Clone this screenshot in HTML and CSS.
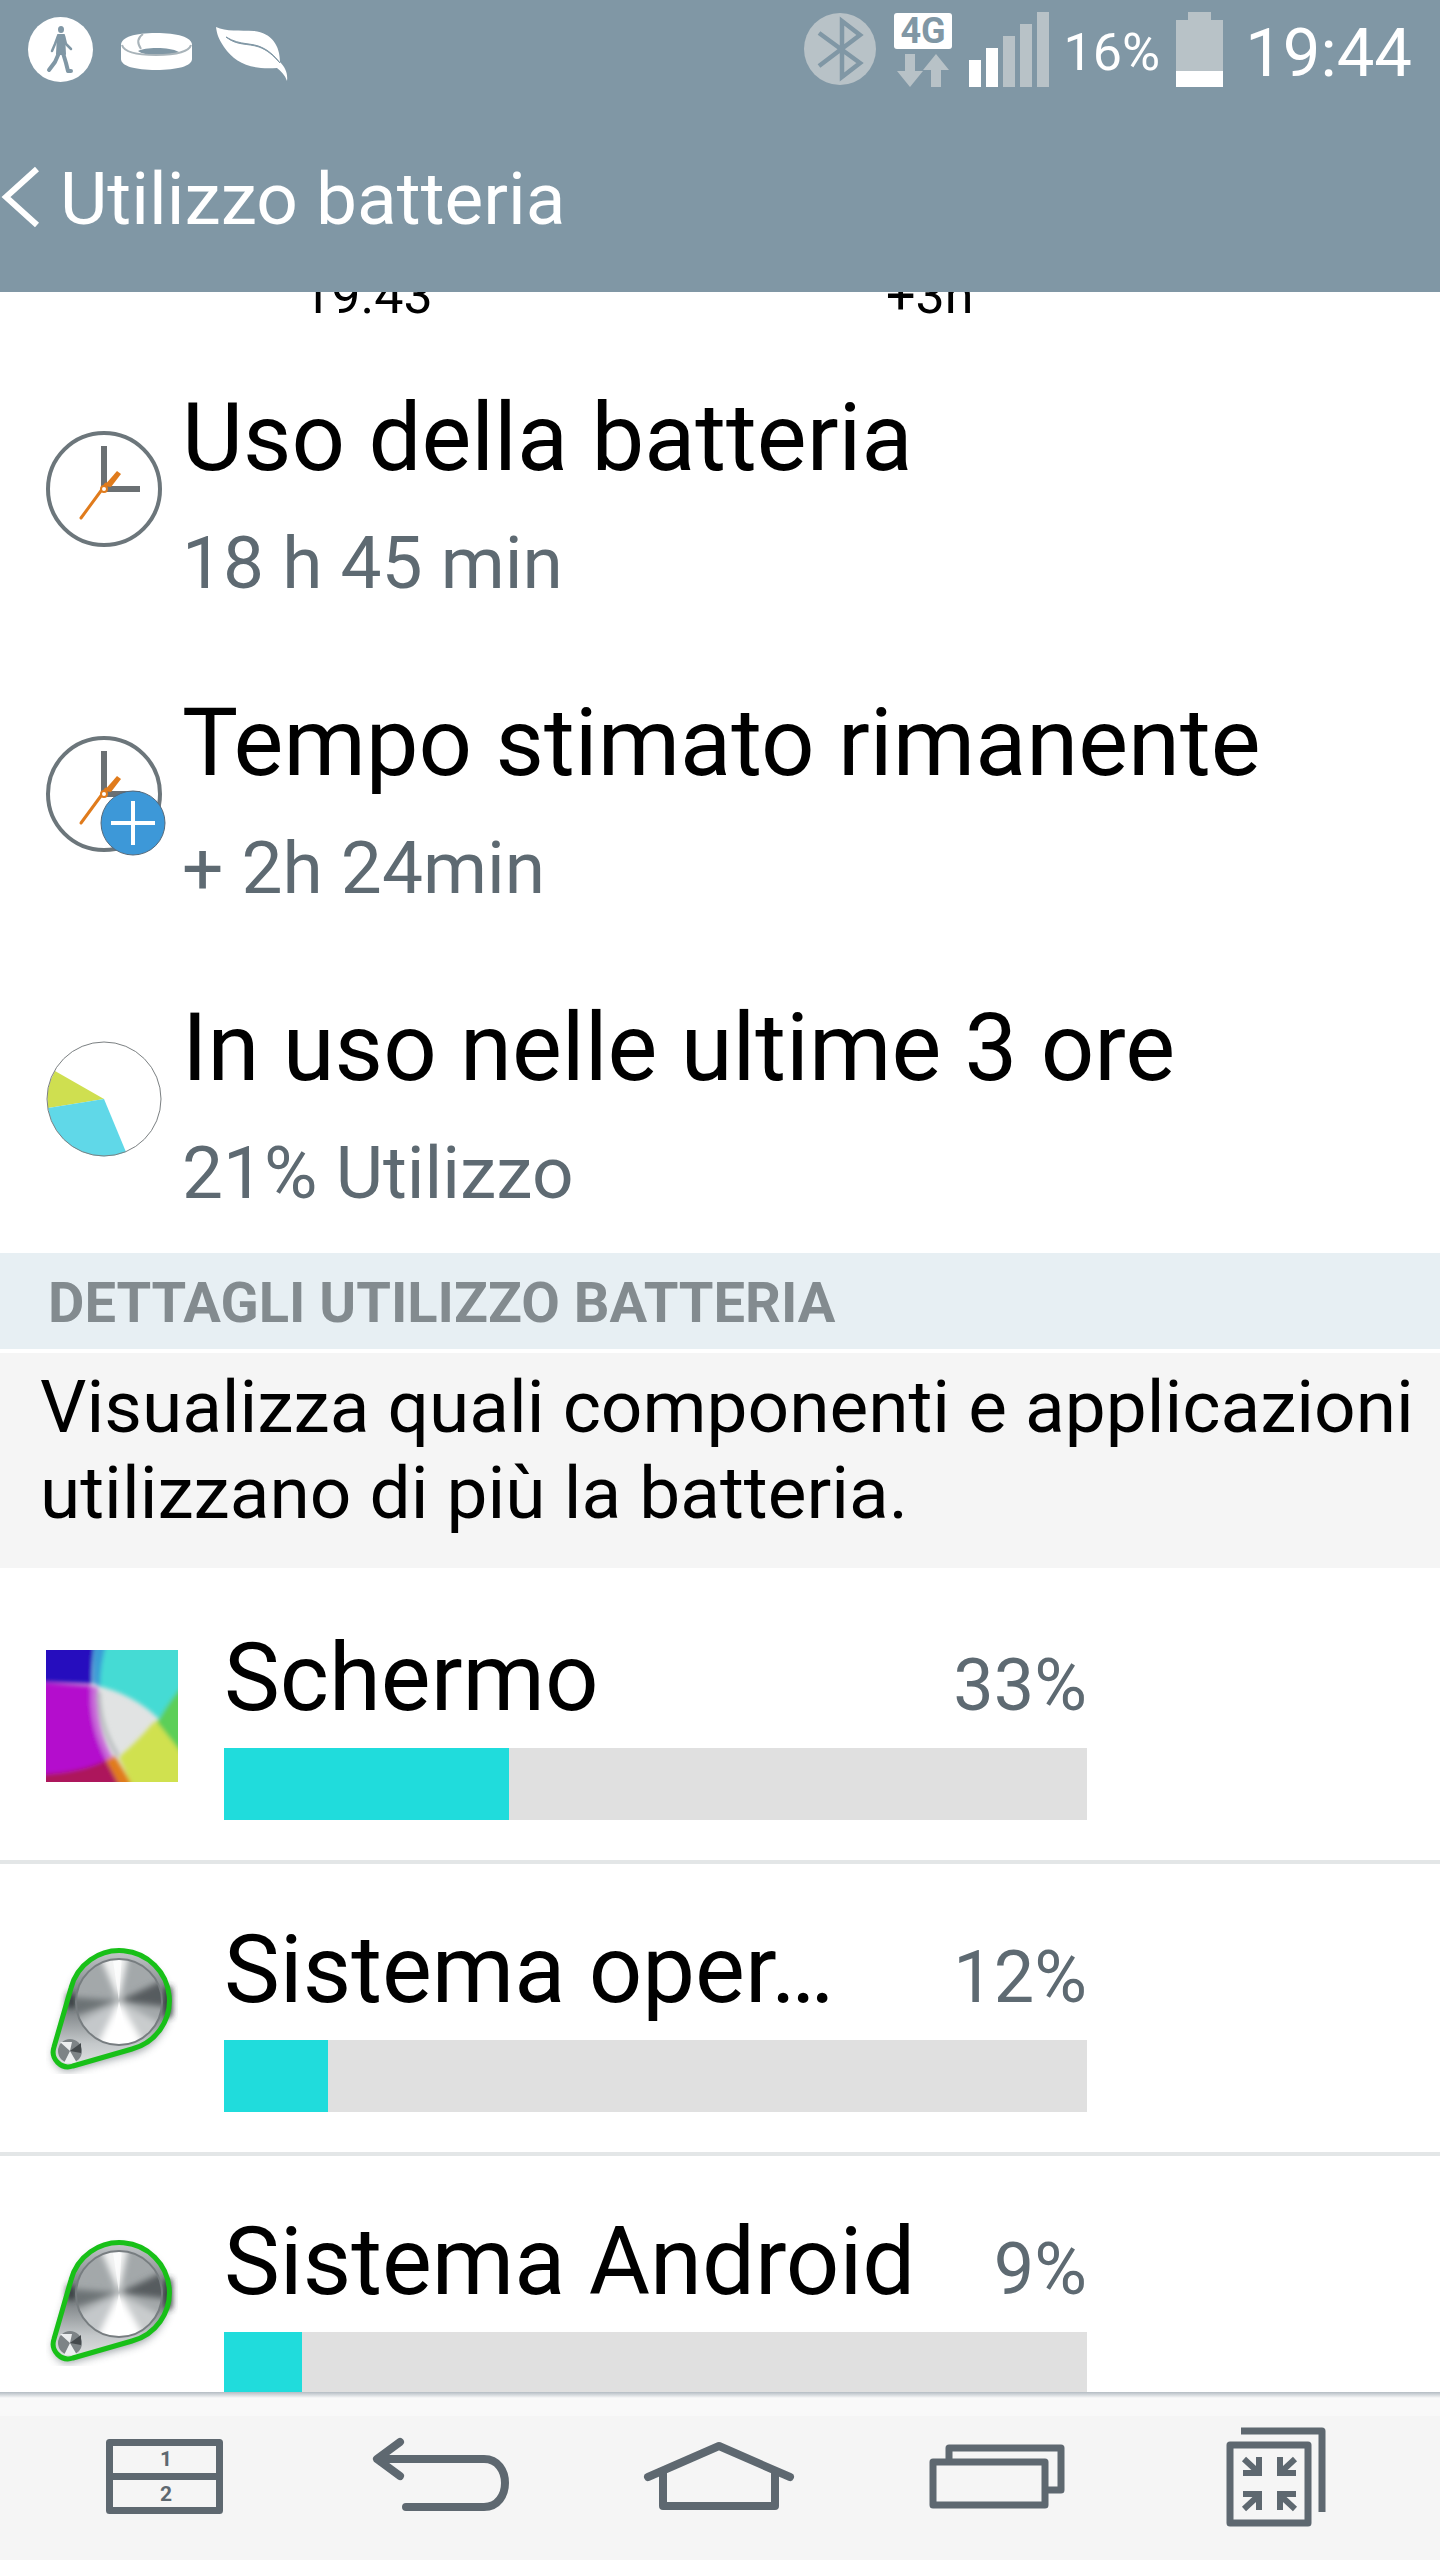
FILE: index.html
```html
<!DOCTYPE html>
<html lang="it">
<head>
<meta charset="utf-8">
<meta name="viewport" content="width=device-width, initial-scale=1">
<title>Utilizzo batteria</title>
<link rel="stylesheet" href="styles.css">
</head>
<body>
<header class="top">
  <div class="status">
    <svg class="notices" width="280" height="100" viewBox="20 0 280 100" aria-hidden="true">
      <circle cx="60.500" cy="49.500" r="32.500" fill="#fff"/>
      <g fill="#8097a5" stroke="#8097a5" stroke-linecap="round" stroke-linejoin="round">
        <ellipse cx="61" cy="29.500" rx="3" ry="3.500" stroke="none"/>
        <path d="M58 35l6 0 1 19-8 0z" stroke-width="2"/>
        <path d="M58 36l-3 8-3 7M64 36l2 8 5 5" fill="none" stroke-width="2.500"/>
        <path d="M59 53l-4 9-6 8M63 53l3 10 2 8 3 0" fill="none" stroke-width="4"/>
      </g>
      <path d="M121 45c0-8 14-12 35-12s36 4 36 12v14c0 7-15 11-36 11s-35-4-35-11z" fill="#fff"/>
      <path d="M138 51c4-2 10-3 19-3s16 1 22 4c-5 2-14 3-22 3s-15-1-19-4z" fill="#8097a5"/>
      <path d="M122 45c2 7 16 10 34 10s33-3 35-10M143 34c-6 4-6 9-2 15" fill="none" stroke="#a9b4ba" stroke-width="2"/>
      <path d="M216 27c10 5 24 3 38 4 18 2 26 15 26 31 5 5 8 11 7 19-2-6-6-10-10-13-26 2-42-5-53-21-6-9-7-13-8-20z" fill="#fff"/>
      <path d="M226 37c15 9 26 5 37 11 8 4 13 10 17 15-7-8-13-13-21-16-12-4-22-1-33-10z" fill="#8097a5" stroke="#8097a5"/>
    </svg>
    <svg class="signals" width="252" height="100" viewBox="800 0 252 100" aria-hidden="true">
      <circle cx="840" cy="49" r="36" fill="#b8c2c7"/>
      <path d="M819 33l41 30-18 14V21l18 14-41 31" fill="none" stroke="#8097a5" stroke-width="4.500"/>
      <rect x="894" y="13" width="58" height="36" rx="3" fill="#fff"/>
      <text x="923" y="43" class="net">4G</text>
      <path d="M905 54h10v17h8l-13 16-13-16h8zM931 87h10V70h8l-13-16-13 16h8z" fill="#b8c2c7"/>
      <path d="M969 60h12v27h-12zM986 48h12v39h-12z" fill="#fff"/>
      <path d="M1003 36h12v51h-12zM1020 24h12v63h-12zM1037 12h12v75h-12z" fill="#b8c2c7"/>
    </svg>
    <span class="charge">16%</span>
    <svg class="cell" width="47" height="100" viewBox="1176 0 47 100" aria-hidden="true">
      <path d="M1188 12h23v8h12v52h-47V20h12z" fill="#b8c2c7"/><path d="M1176 71h47v16h-47z" fill="#fff"/>
    </svg>
    <time class="clock">19:44</time>
  </div>
  <div class="titlebar">
    <button class="back" type="button" aria-label="Indietro">
      <svg width="40" height="64" viewBox="0 0 40 64"><path d="M37 4L6 32l31 28" fill="none" stroke="#fff" stroke-width="6"/></svg>
    </button>
    <h1>Utilizzo batteria</h1>
  </div>
</header>

<main class="content">
  <div class="axis"><span class="now">19.43</span><span class="later">+3h</span></div>
  <ul class="facts">
    <li class="fact">
      <svg class="fact-icon" width="124" height="124" viewBox="0 0 124 124" aria-hidden="true">
        <g id="dial">
          <circle cx="60" cy="60" r="56" fill="#fff" stroke="#6c767b" stroke-width="4"/>
          <path d="M60 17v43h36" fill="none" stroke="#6b7073" stroke-width="6"/>
          <path d="M37 89l25-34" stroke="#e07b1c" stroke-width="3" stroke-linecap="round"/>
          <path d="M60 57l13-15 4 3-10 13z" fill="#e07b1c"/>
          <circle cx="60" cy="60" r="3" fill="#fff" stroke="#e07b1c" stroke-width="2"/>
        </g>
      </svg>
      <div><h2>Uso della batteria</h2><p>18 h 45 min</p></div>
    </li>
    <li class="fact">
      <svg class="fact-icon" width="124" height="124" viewBox="0 0 124 124" aria-hidden="true">
        <use href="#dial"/>
        <circle cx="89" cy="89" r="32" fill="#3d98d8" stroke="#55697a"/>
        <path d="M67 89h44M89 67v44" stroke="#fff" stroke-width="4"/>
      </svg>
      <div><h2>Tempo stimato rimanente</h2><p>+ 2h 24min</p></div>
    </li>
    <li class="fact">
      <svg class="fact-icon" width="124" height="124" viewBox="0 0 124 124" aria-hidden="true">
        <path d="M60 60L11 32A57 57 0 0 0 4 69z" fill="#cfdf50"/>
        <path d="M60 60L4 69A57 57 0 0 0 82 113z" fill="#60d8e8"/>
        <circle cx="60" cy="60" r="57" fill="none" stroke="#7b8082"/>
      </svg>
      <div><h2>In uso nelle ultime 3 ore</h2><p>21% Utilizzo</p></div>
    </li>
  </ul>

  <h3 class="section">DETTAGLI UTILIZZO BATTERIA</h3>
  <p class="hint">Visualizza quali componenti e applicazioni utilizzano di più la batteria.</p>

  <ul class="apps">
    <li class="app">
      <svg class="app-icon" width="132" height="132" viewBox="0 0 132 132" aria-hidden="true">
        <defs><filter id="soft" x="-10%" y="-10%" width="120%" height="120%"><feGaussianBlur stdDeviation="2"/></filter></defs>
        <path d="M0 0h132v132H0z" fill="#e1e3e3"/>
        <g filter="url(#soft)">
          <path d="M-9-9H49Q45 15 46 34L-9 32z" fill="#280fbe"/>
          <path d="M-9 32L45 36Q44 75 61 111Q35 124-9 125z" fill="#b40fcd"/>
          <path d="M45 36L52 38Q49 78 69 112L61 111Q42 76 45 36z" fill="#c86ad8"/>
          <path d="M-9 125Q38 122 60 110L78 141H-9z" fill="#ad175c"/>
          <path d="M60 110L69 106 90 141H76z" fill="#e17c1b"/>
          <path d="M73 107Q92 91 106 74L112 70L141 105V141H88z" fill="#d0e150"/>
          <path d="M111 72L141 20V110Q127 92 111 72z" fill="#5ccf58"/>
          <path d="M59-9H141V30Q124 50 113 69Q87 44 52 36Q54 12 59-9z" fill="#45dbd4"/>
          <path d="M49-9H61Q54 14 54 37L47 33Q46 12 49-9z" fill="#3b9bd6"/>
          <path d="M53 42Q53 76 72 106" fill="none" stroke="#b9bdbf" stroke-width="4"/>
        </g>
      </svg>
      <div class="usage">
        <div class="line"><h2>Schermo</h2><span>33%</span></div>
        <div class="track"><div class="fill" style="width:33%"></div></div>
      </div>
    </li>
    <li class="app">
      <svg class="app-icon" width="132" height="132" viewBox="0 0 132 132" aria-hidden="true">
        <defs>
          <filter id="shade" x="-20%" y="-20%" width="140%" height="140%"><feGaussianBlur stdDeviation="4"/></filter>
          <filter id="brush" x="-20%" y="-20%" width="140%" height="140%"><feGaussianBlur stdDeviation="3"/></filter>
          <linearGradient id="rim" x1="0" y1="0" x2="0" y2="1"><stop offset="0" stop-color="#c4c8ca"/><stop offset=".45" stop-color="#6d7376"/><stop offset=".8" stop-color="#c4c8ca"/><stop offset="1" stop-color="#e0e2e3"/></linearGradient>
          <clipPath id="face"><circle cx="73" cy="60" r="43"/></clipPath>
        </defs>
        <g id="belt">
          <path d="M25 50A50 50 0 1 1 86 112L27 128A15 15 0 0 1 8 109z" fill="#59636b" opacity=".6" filter="url(#shade)"/>
          <path d="M25 46A50 50 0 1 1 86 107L27 124A15 15 0 0 1 8 105z" fill="url(#rim)"/>
          <path d="M122 45v30M25 52v14" stroke="#33383b" stroke-width="8" filter="url(#brush)"/>
          <g clip-path="url(#face)">
            <path d="M20 10h106v106H20z" fill="#a3a8aa"/>
            <g filter="url(#brush)">
              <path d="M73 59L50 5H84z" fill="#f2f3f3"/>
              <path d="M73 59L130 32V66z" fill="#565b5e"/>
              <path d="M73 59L45 116H106z" fill="#fff"/>
              <path d="M73 59L45 116L15 90z" fill="#c4c8ca"/>
              <path d="M73 59L15 54V78z" fill="#6c7275"/>
              <path d="M73 59L106 116L130 90z" fill="#c9cccd"/>
            </g>
            <path d="M73 59L66 12H76zM73 59L64 106H84z" fill="#fff" opacity=".7"/>
          </g>
          <circle cx="73" cy="60" r="43" fill="none" stroke="#777d80" stroke-width="2"/>
          <circle cx="24" cy="109" r="12" fill="#7d8386"/>
          <path d="M24 109L14 100H26zM24 109L18 121H31z" fill="#eceeef"/>
          <path d="M24 109L35 101V111z" fill="#44494c"/>
          <path d="M25 46A50 50 0 1 1 86 107L27 124A15 15 0 0 1 8 105z" fill="none" stroke="#18c018" stroke-width="5"/>
        </g>
      </svg>
      <div class="usage">
        <div class="line"><h2>Sistema oper…</h2><span>12%</span></div>
        <div class="track"><div class="fill" style="width:12%"></div></div>
      </div>
    </li>
    <li class="app">
      <svg class="app-icon" width="132" height="132" viewBox="0 0 132 132" aria-hidden="true"><use href="#belt"/></svg>
      <div class="usage">
        <div class="line"><h2>Sistema Android</h2><span>9%</span></div>
        <div class="track"><div class="fill" style="width:9%"></div></div>
      </div>
    </li>
  </ul>
</main>

<nav class="keys" aria-label="Navigazione">
  <button type="button" aria-label="Doppia finestra">
    <svg width="160" height="110" viewBox="84 2420 160 110"><path d="M109.500 2442.500h110v68h-110zM109 2476.500h111" class="ln"/><text x="166" y="2466" class="num">1</text><text x="166" y="2501" class="num">2</text></svg>
  </button>
  <button type="button" aria-label="Indietro">
    <svg width="160" height="110" viewBox="362 2420 160 110"><path d="M400 2442l-23 17 23 17M378 2459h106c28 0 28 48 0 48h-78" class="ln round"/></svg>
  </button>
  <button type="button" aria-label="Home">
    <svg width="160" height="110" viewBox="640 2420 160 110"><path d="M648 2477l71-31 71 31M663 2472v34h112v-34" class="ln round"/></svg>
  </button>
  <button type="button" aria-label="App recenti">
    <svg width="160" height="110" viewBox="918 2420 160 110"><path d="M933 2462h112v43h-112zM949 2460v-12h112v42h-15" class="ln"/></svg>
  </button>
  <button type="button" aria-label="Riduci">
    <svg width="160" height="110" viewBox="1196 2420 160 110"><path d="M1230 2445h78v78h-78z" class="ln"/><path d="M1241 2431h81v81" class="ln"/><path d="M1244 2459l14 13M1259 2457v16h-16M1295 2459l-14 13M1280 2457v16h16M1244 2509l14-13M1259 2510v-16h-16M1295 2509l-14-13M1280 2510v-16h16" class="ln arrows"/></svg>
  </button>
</nav>
</body>
</html>
```
FILE: styles.css
```css
* { box-sizing: border-box; margin: 0; padding: 0; }
html, body { height: 100%; }
body {
  display: flex;
  flex-direction: column;
  overflow: hidden;
  background: #fff;
  color: #000;
  font-family: Roboto, "Open Sans", sans-serif;
  font-weight: 400;
}
svg { display: block; flex: none; }
h1, h2 { font-weight: 400; }
ul { list-style: none; }
button { border: 0; background: none; font: inherit; color: inherit; cursor: pointer; }

.top { flex: none; background: #8097a5; color: #fff; }
.status { display: flex; align-items: center; height: 100px; padding: 0 28px 0 20px; }
.notices { margin-right: auto; }
.net { font: 700 36px Roboto, sans-serif; fill: #8097a5; text-anchor: middle; }
.charge { margin: 6px 16px 0 12px; font-size: 52px; line-height: 64px; }
.clock { margin: 6px 0 0 22px; font-size: 67px; line-height: 80px; }
.titlebar { display: flex; align-items: center; height: 192px; padding-top: 2px; }
.back { width: 60px; }
.titlebar h1 { margin-top: 4px; font-size: 73px; line-height: 84px; }

.content { flex: 1; min-height: 0; overflow: hidden; }
.axis { display: grid; grid-template-columns: 302px 584px 1fr; height: 90px; font-size: 52px; line-height: 8px; }
.now { grid-column: 2; }
.later { grid-column: 3; }

.facts { display: grid; gap: 44px; }
.fact { display: flex; height: 261px; padding-left: 44px; }
.fact-icon { margin: 47px 14px 0 0; }
.fact h2 { font-size: 94px; line-height: 112px; }
.fact p { font-size: 73px; line-height: 84px; margin-top: 27px; color: #5e6a72; }

.section { height: 96px; margin-bottom: 4px; padding-left: 48px; background: #e7eff3; color: #838b8f; font-size: 56px; line-height: 100px; }
.hint { padding: 11px 16px 32px 40px; background: #f5f5f5; font-size: 73px; line-height: 86px; }

.apps { padding-top: 4px; }
.app { display: flex; height: 292px; padding: 0 353px 0 46px; border-bottom: 4px solid #e3e6e7; }
.app-icon { margin: 78px 46px 0 0; }
.usage { flex: 1; min-width: 0; padding-top: 48px; }
.line { display: flex; align-items: baseline; justify-content: space-between; height: 128px; }
.line h2 { min-width: 0; overflow: hidden; white-space: nowrap; text-overflow: ellipsis; font-size: 94px; line-height: 116px; }
.line span { padding-left: 48px; font-size: 72px; color: #5e6a72; }
.track { height: 72px; background: #e0e0e0; }
.fill { height: 100%; background: #20dcdc; }

.keys {
  flex: none;
  display: flex;
  justify-content: space-between;
  align-items: flex-start;
  height: 168px;
  padding: 28px 84px 0;
  background: linear-gradient(#b4bcc3, #f9f9f9 6px, #f9f9f9 24px, #f5f5f5 24px);
}
.ln { fill: none; stroke: #5e6870; stroke-width: 7; stroke-linejoin: round; }
.round { stroke-width: 8; stroke-linecap: round; }
.arrows { stroke-width: 6; stroke-linejoin: miter; }
.num { font: 700 21px Roboto, sans-serif; fill: #5e6870; text-anchor: middle; }
```
